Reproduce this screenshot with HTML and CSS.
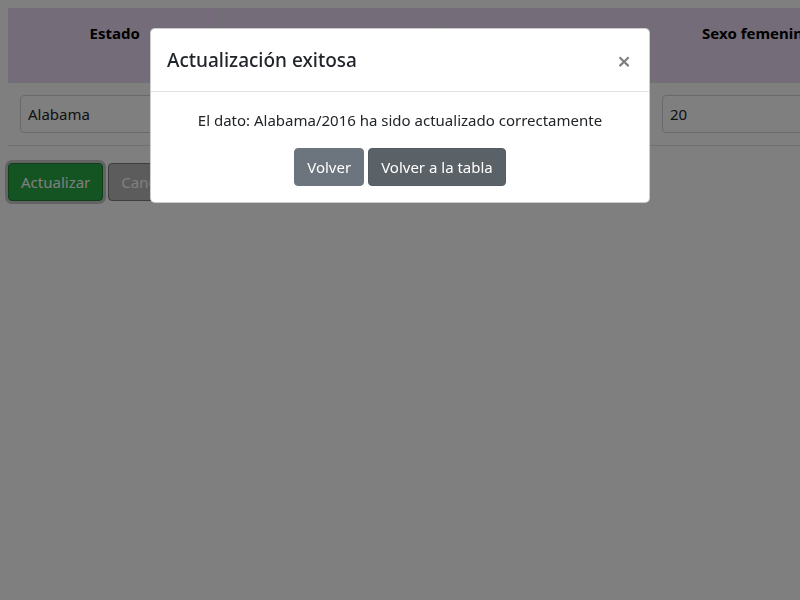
FILE: index.html
```html
<!DOCTYPE html>
<html lang="es">
<head>
<meta charset="utf-8">
<title>Actualizar dato</title>
<link rel="stylesheet" href="styles.css">
</head>
<body>
<main class="page">
  <table class="data-table">
    <thead>
      <tr>
        <th>Estado</th>
        <th>Año</th>
        <th>Sexo masculino</th>
        <th>Sexo femenino</th>
      </tr>
    </thead>
    <tbody>
      <tr>
        <td><input class="form-control" type="text" value="Alabama"></td>
        <td><input class="form-control" type="text" value="2016"></td>
        <td><input class="form-control" type="text" value="15"></td>
        <td><input class="form-control" type="text" value="20"></td>
      </tr>
    </tbody>
  </table>
  <div class="actions">
    <button class="btn btn-success btn-focus">Actualizar</button>
    <button class="btn btn-cancel">Cancelar</button>
  </div>
</main>

<div class="backdrop"></div>

<div class="modal">
  <div class="modal-content">
    <div class="modal-header">
      <h5 class="modal-title">Actualización exitosa</h5>
      <button class="close" aria-label="Close">×</button>
    </div>
    <div class="modal-body">
      <p class="message">El dato: Alabama/2016 ha sido actualizado correctamente</p>
      <div class="modal-buttons">
        <button class="btn btn-secondary">Volver</button>
        <button class="btn btn-secondary-dark">Volver a la tabla</button>
      </div>
    </div>
  </div>
</div>
</body>
</html>
```
FILE: styles.css
```css
* { box-sizing: border-box; }
html, body { height: 100%; }
body {
  margin: 0;
  padding: 8px;
  background: #ffffff;
  font-family: "Noto Sans", "Open Sans", sans-serif;
  font-size: 15px;
  line-height: 24px;
  color: #212529;
  overflow: hidden;
}
.page { width: 900px; }
.data-table {
  border-collapse: collapse;
  table-layout: fixed;
  width: 856px;
  background: #ffffff;
}
.data-table th {
  width: 214px;
  background: #e8daf2;
  color: #000;
  font-weight: 700;
  text-align: center;
  vertical-align: top;
  padding: 13px 12px 37px;
  border-left: 1px solid #dee2e6;
  white-space: nowrap;
}
.data-table th:first-child { border-left: 0; }
.data-table td {
  padding: 12px;
  border-top: 1px solid #dee2e6;
  border-bottom: 1px solid #dee2e6;
  background: #ffffff;
}
.form-control {
  display: block;
  width: 100%;
  height: 38px;
  padding: 6px 7px;
  font: inherit;
  color: #212529;
  background: #fff;
  border: 1px solid #ced4da;
  border-radius: 4px;
}
.actions {
  margin-top: 17px;
  display: flex;
  gap: 5px;
}
.btn {
  display: inline-block;
  height: 38px;
  padding: 6px 12px;
  font: inherit;
  line-height: 24px;
  color: #fff;
  border: 1px solid transparent;
  border-radius: 4px;
  cursor: pointer;
}
.btn-success { background: #28a745; border-color: #1e7e34; }
.btn-focus { box-shadow: 0 0 0 3px rgba(160, 160, 160, 0.6); }
.btn-cancel { background: #b8b8b8; border-color: #7a7a7a; }
.btn-secondary { background: #6c757d; border-color: #6c757d; }
.btn-secondary-dark { background: #5a6268; border-color: #545b62; }

.backdrop {
  position: fixed;
  inset: 0;
  background: rgba(0, 0, 0, 0.5);
}
.modal {
  position: fixed;
  inset: 0;
  display: flex;
  justify-content: center;
  align-items: flex-start;
  padding-top: 28px;
}
.modal-content {
  width: 500px;
  background: #fff;
  border: 1px solid rgba(0, 0, 0, 0.2);
  border-radius: 5px;
}
.modal-header {
  display: flex;
  justify-content: space-between;
  align-items: flex-start;
  padding: 16px;
  border-bottom: 1px solid #dee2e6;
}
.modal-title {
  margin: 0;
  font-size: 19px;
  font-weight: 500;
  line-height: 30px;
}
.close {
  margin: -16px -16px -16px auto;
  padding: 20px 18px 16px;
  background: transparent;
  border: 0;
  font-family: inherit;
  font-size: 24px;
  font-weight: 600;
  line-height: 1;
  color: #000;
  opacity: 0.5;
}
.modal-body {
  padding: 16px;
  text-align: center;
}
.message { margin: 0 0 16px; }
.modal-buttons {
  display: flex;
  justify-content: center;
  gap: 4px;
}
```
